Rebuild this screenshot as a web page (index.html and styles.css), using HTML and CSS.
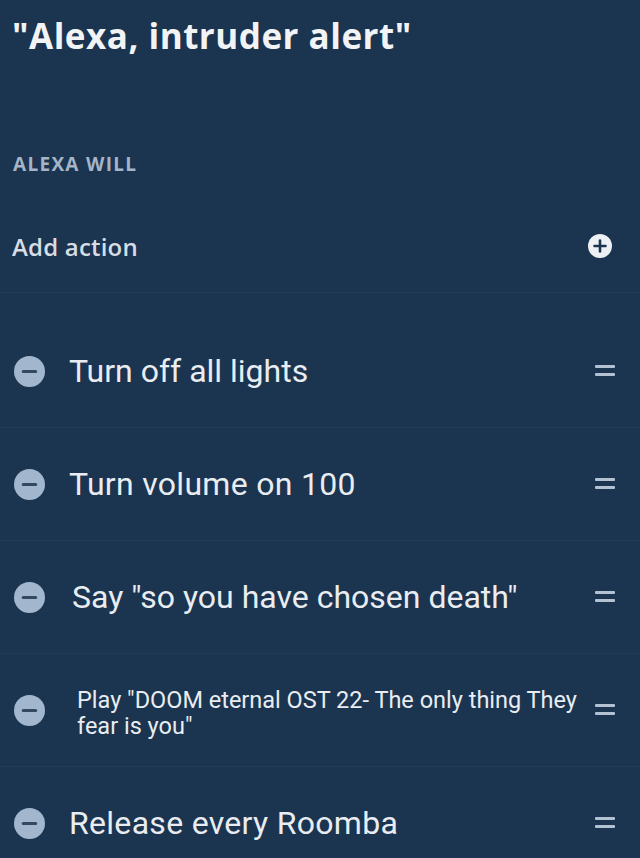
FILE: index.html
```html
<!DOCTYPE html>
<html lang="en">
<head>
<meta charset="utf-8">
<title>Alexa routine</title>
<link rel="stylesheet" href="styles.css">
</head>
<body>
<main class="routine">
  <h1 class="title">"Alexa, intruder alert"</h1>
  <h2 class="section-label">ALEXA WILL</h2>
  <div class="add-row">
    <span class="add-text">Add action</span>
    <svg class="plus-icon" viewBox="0 0 24 24" width="24" height="24" aria-hidden="true">
      <circle cx="12" cy="12" r="12" fill="#eef1f4"/>
      <path d="M12 6.5v11M6.5 12h11" stroke="#1c3551" stroke-width="2.6" stroke-linecap="round"/>
    </svg>
  </div>
  <ul class="actions">
    <li class="action">
      <svg class="minus-icon" viewBox="0 0 30 30" width="31" height="31" aria-hidden="true"><circle cx="15" cy="15" r="15" fill="#a2b7ce"/><path d="M9 15h12" stroke="#33495f" stroke-width="3" stroke-linecap="round"/></svg>
      <span class="action-text">Turn off all lights</span>
      <svg class="handle" viewBox="0 0 20 14" width="20" height="14" aria-hidden="true"><rect x="0" y="1" width="20" height="3" rx="1" fill="#b3c2d2"/><rect x="0" y="9" width="20" height="3" rx="1" fill="#b3c2d2"/></svg>
    </li>
    <li class="action">
      <svg class="minus-icon" viewBox="0 0 30 30" width="31" height="31" aria-hidden="true"><circle cx="15" cy="15" r="15" fill="#a2b7ce"/><path d="M9 15h12" stroke="#33495f" stroke-width="3" stroke-linecap="round"/></svg>
      <span class="action-text action-text--wide">Turn volume on 100</span>
      <svg class="handle" viewBox="0 0 20 14" width="20" height="14" aria-hidden="true"><rect x="0" y="1" width="20" height="3" rx="1" fill="#b3c2d2"/><rect x="0" y="9" width="20" height="3" rx="1" fill="#b3c2d2"/></svg>
    </li>
    <li class="action">
      <svg class="minus-icon" viewBox="0 0 30 30" width="31" height="31" aria-hidden="true"><circle cx="15" cy="15" r="15" fill="#a2b7ce"/><path d="M9 15h12" stroke="#33495f" stroke-width="3" stroke-linecap="round"/></svg>
      <span class="action-text action-text--say">Say "so you have chosen death"</span>
      <svg class="handle" viewBox="0 0 20 14" width="20" height="14" aria-hidden="true"><rect x="0" y="1" width="20" height="3" rx="1" fill="#b3c2d2"/><rect x="0" y="9" width="20" height="3" rx="1" fill="#b3c2d2"/></svg>
    </li>
    <li class="action">
      <svg class="minus-icon" viewBox="0 0 30 30" width="31" height="31" aria-hidden="true"><circle cx="15" cy="15" r="15" fill="#a2b7ce"/><path d="M9 15h12" stroke="#33495f" stroke-width="3" stroke-linecap="round"/></svg>
      <span class="action-text action-text--small">Play "DOOM eternal OST 22- The only thing They fear is you"</span>
      <svg class="handle" viewBox="0 0 20 14" width="20" height="14" aria-hidden="true"><rect x="0" y="1" width="20" height="3" rx="1" fill="#b3c2d2"/><rect x="0" y="9" width="20" height="3" rx="1" fill="#b3c2d2"/></svg>
    </li>
    <li class="action">
      <svg class="minus-icon" viewBox="0 0 30 30" width="31" height="31" aria-hidden="true"><circle cx="15" cy="15" r="15" fill="#a2b7ce"/><path d="M9 15h12" stroke="#33495f" stroke-width="3" stroke-linecap="round"/></svg>
      <span class="action-text action-text--wide">Release every Roomba</span>
      <svg class="handle" viewBox="0 0 20 14" width="20" height="14" aria-hidden="true"><rect x="0" y="1" width="20" height="3" rx="1" fill="#b3c2d2"/><rect x="0" y="9" width="20" height="3" rx="1" fill="#b3c2d2"/></svg>
    </li>
  </ul>
</main>
</body>
</html>
```

FILE: styles.css
```css
html, body {
  margin: 0;
  padding: 0;
  background: #1b3450;
}

body {
  width: 640px;
  height: 858px;
  overflow: hidden;
  font-family: Roboto, "Liberation Sans", sans-serif;
  color: #e9edf1;
}

.routine {
  display: flex;
  flex-direction: column;
}

.title {
  margin: 16px 0 0 12px;
  font-family: "Open Sans", "Liberation Sans", sans-serif;
  font-size: 35px;
  line-height: 40px;
  font-weight: 700;
  color: #f1f3f5;
  letter-spacing: 0.5px;
}

.section-label {
  margin: 96px 0 0 13px;
  font-family: "Open Sans", "Liberation Sans", sans-serif;
  font-size: 19px;
  line-height: 24px;
  font-weight: 700;
  color: #a5b5c8;
  letter-spacing: 1.3px;
}

.add-row {
  margin-top: 24px;
  height: 92px;
  display: flex;
  align-items: center;
  justify-content: space-between;
  padding: 0 28px 0 12px;
  border-bottom: 1px solid rgba(255, 255, 255, 0.035);
}

.add-text {
  font-family: "Open Sans", "Liberation Sans", sans-serif;
  font-size: 24px;
  font-weight: 600;
  color: #d7dde4;
  letter-spacing: 0.2px;
}

.plus-icon {
  display: block;
}

.actions {
  list-style: none;
  margin: 22px 0 0;
  padding: 0;
}

.action {
  height: 112px;
  display: flex;
  align-items: center;
  gap: 10px;
  padding: 0 25px 0 14px;
  border-bottom: 1px solid rgba(255, 255, 255, 0.035);
}

.minus-icon {
  flex: none;
  display: block;
  margin-right: 14px;
}

.action-text {
  flex: 1;
  font-size: 32px;
  line-height: 38px;
  color: #e9edf1;
}

.action-text--wide {
  letter-spacing: 0.3px;
}

.action-text--say {
  padding-left: 3px;
}

.action-text--small {
  font-size: 23.5px;
  line-height: 26px;
  padding: 6px 0 0 8px;
}

.handle {
  flex: none;
  display: block;
}
```
